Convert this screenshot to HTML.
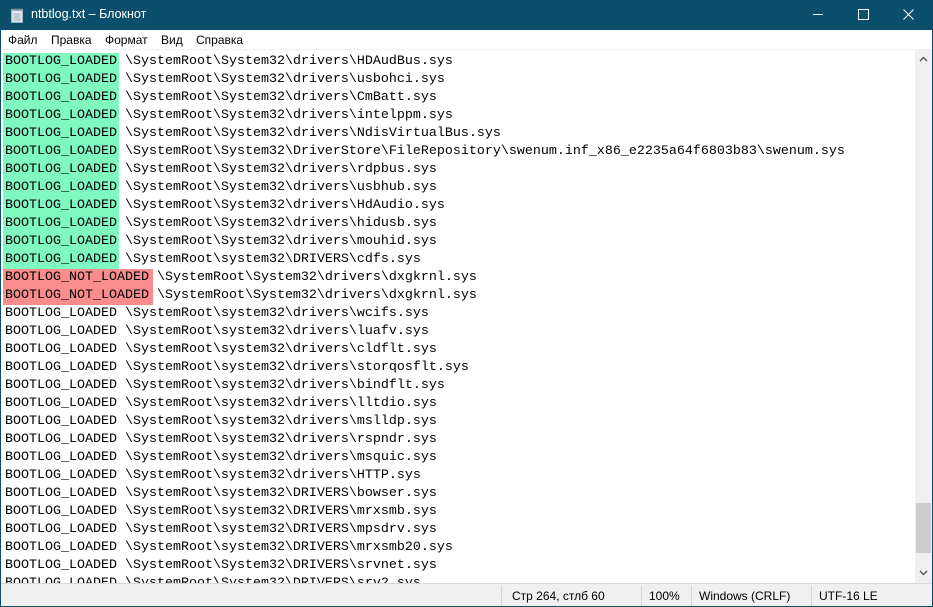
<!DOCTYPE html>
<html><head><meta charset="utf-8"><style>
*{margin:0;padding:0;box-sizing:border-box}
body{width:933px;height:607px;overflow:hidden;background:#0b4f6c;position:relative;font-family:"Liberation Sans","Noto Sans CJK SC",sans-serif}
.title{position:absolute;left:0;top:0;width:933px;height:30px;background:#0b4f6c;color:#fff;font-size:12.5px}
.title .t{position:absolute;left:31px;top:7px}
.menu{position:absolute;left:1px;top:30px;width:931px;height:20px;background:#fff;font-size:12px;color:#000;border-bottom:1px solid #f0f0f0}
.menu span{position:absolute;top:3px}
.edit{position:absolute;left:1px;top:50px;width:914px;height:533px;background:#fff;overflow:hidden}
.edit pre{font-family:"Liberation Mono",monospace;font-size:13.33px;line-height:18px;color:#000;padding-left:4px;margin-top:1px;padding-top:2px}
.g,.r{display:inline-block;height:18px;vertical-align:top;line-height:18px;padding-top:0}
.g{background:#80f9c0;box-shadow:-2px 0 #80f9c0,2px 0 #80f9c0}
.r{background:#f98c8c;box-shadow:-2px 0 #f98c8c,4px 0 #f98c8c}
.sb{position:absolute;left:915px;top:50px;width:17px;height:533px;background:#f0f0f0}
.thumb{position:absolute;left:1px;top:453px;width:15px;height:50px;background:#cdcdcd}
.status{position:absolute;left:1px;top:583px;width:931px;height:23px;background:#f0f0f0;border-top:1px solid #d7d7d7;font-size:12px;color:#000}
.status span{position:absolute;top:5px}
.status i{position:absolute;top:2px;width:1px;height:20px;background:#d7d7d7}
</style></head><body>
<div class="title">
<svg style="position:absolute;left:10px;top:7px" width="14" height="16" viewBox="0 0 14 16"><rect x="1.5" y="2.5" width="11" height="13" fill="#dfe8ee" stroke="#9db1c0"/><path d="M3 1v3M5 1v3M7 1v3M9 1v3M11 1v3" stroke="#5c6c78"/><path d="M3.5 7h7M3.5 9h7M3.5 11h7M3.5 13h7" stroke="#9fb0bc"/></svg>
<span class="t">ntbtlog.txt – Блокнот</span>
<svg style="position:absolute;left:813px;top:14px" width="10" height="2"><rect width="10" height="1" fill="#fff"/></svg>
<svg style="position:absolute;left:858px;top:9px" width="11" height="11"><rect x=".5" y=".5" width="10" height="10" fill="none" stroke="#fff"/></svg>
<svg style="position:absolute;left:903px;top:9px" width="11" height="11"><path d="M.5 .5l10 10M10.5 .5l-10 10" stroke="#fff"/></svg>
</div>
<div class="menu"><span style="left:7px">Файл</span><span style="left:50px">Правка</span><span style="left:104px">Формат</span><span style="left:160px">Вид</span><span style="left:195px">Справка</span></div>
<div class="edit"><pre><span class="g">BOOTLOG_LOADED</span> \SystemRoot\System32\drivers\HDAudBus.sys
<span class="g">BOOTLOG_LOADED</span> \SystemRoot\System32\drivers\usbohci.sys
<span class="g">BOOTLOG_LOADED</span> \SystemRoot\System32\drivers\CmBatt.sys
<span class="g">BOOTLOG_LOADED</span> \SystemRoot\System32\drivers\intelppm.sys
<span class="g">BOOTLOG_LOADED</span> \SystemRoot\System32\drivers\NdisVirtualBus.sys
<span class="g">BOOTLOG_LOADED</span> \SystemRoot\System32\DriverStore\FileRepository\swenum.inf_x86_e2235a64f6803b83\swenum.sys
<span class="g">BOOTLOG_LOADED</span> \SystemRoot\System32\drivers\rdpbus.sys
<span class="g">BOOTLOG_LOADED</span> \SystemRoot\System32\drivers\usbhub.sys
<span class="g">BOOTLOG_LOADED</span> \SystemRoot\System32\drivers\HdAudio.sys
<span class="g">BOOTLOG_LOADED</span> \SystemRoot\System32\drivers\hidusb.sys
<span class="g">BOOTLOG_LOADED</span> \SystemRoot\System32\drivers\mouhid.sys
<span class="g">BOOTLOG_LOADED</span> \SystemRoot\system32\DRIVERS\cdfs.sys
<span class="r">BOOTLOG_NOT_LOADED</span> \SystemRoot\System32\drivers\dxgkrnl.sys
<span class="r">BOOTLOG_NOT_LOADED</span> \SystemRoot\System32\drivers\dxgkrnl.sys
BOOTLOG_LOADED \SystemRoot\system32\drivers\wcifs.sys
BOOTLOG_LOADED \SystemRoot\system32\drivers\luafv.sys
BOOTLOG_LOADED \SystemRoot\system32\drivers\cldflt.sys
BOOTLOG_LOADED \SystemRoot\system32\drivers\storqosflt.sys
BOOTLOG_LOADED \SystemRoot\system32\drivers\bindflt.sys
BOOTLOG_LOADED \SystemRoot\system32\drivers\lltdio.sys
BOOTLOG_LOADED \SystemRoot\system32\drivers\mslldp.sys
BOOTLOG_LOADED \SystemRoot\system32\drivers\rspndr.sys
BOOTLOG_LOADED \SystemRoot\system32\drivers\msquic.sys
BOOTLOG_LOADED \SystemRoot\system32\drivers\HTTP.sys
BOOTLOG_LOADED \SystemRoot\system32\DRIVERS\bowser.sys
BOOTLOG_LOADED \SystemRoot\system32\DRIVERS\mrxsmb.sys
BOOTLOG_LOADED \SystemRoot\system32\DRIVERS\mpsdrv.sys
BOOTLOG_LOADED \SystemRoot\system32\DRIVERS\mrxsmb20.sys
BOOTLOG_LOADED \SystemRoot\System32\DRIVERS\srvnet.sys
BOOTLOG_LOADED \SystemRoot\System32\DRIVERS\srv2.sys</pre></div>
<div class="sb">
<svg style="position:absolute;left:4px;top:6px" width="9" height="6"><path d="M1 5l3.5-3.5L8 5" stroke="#606060" stroke-width="1.5" fill="none"/></svg>
<div class="thumb"></div>
<svg style="position:absolute;left:4px;top:520px" width="9" height="6"><path d="M1 1l3.5 3.5L8 1" stroke="#606060" stroke-width="1.5" fill="none"/></svg>
</div>
<div class="status">
<span style="left:511px">Стр 264, стлб 60</span>
<i style="left:500px"></i><i style="left:640px"></i><span style="left:648px">100%</span>
<i style="left:690px"></i><span style="left:698px">Windows (CRLF)</span>
<i style="left:810px"></i><span style="left:818px">UTF-16 LE</span>
</div>
</body></html>
